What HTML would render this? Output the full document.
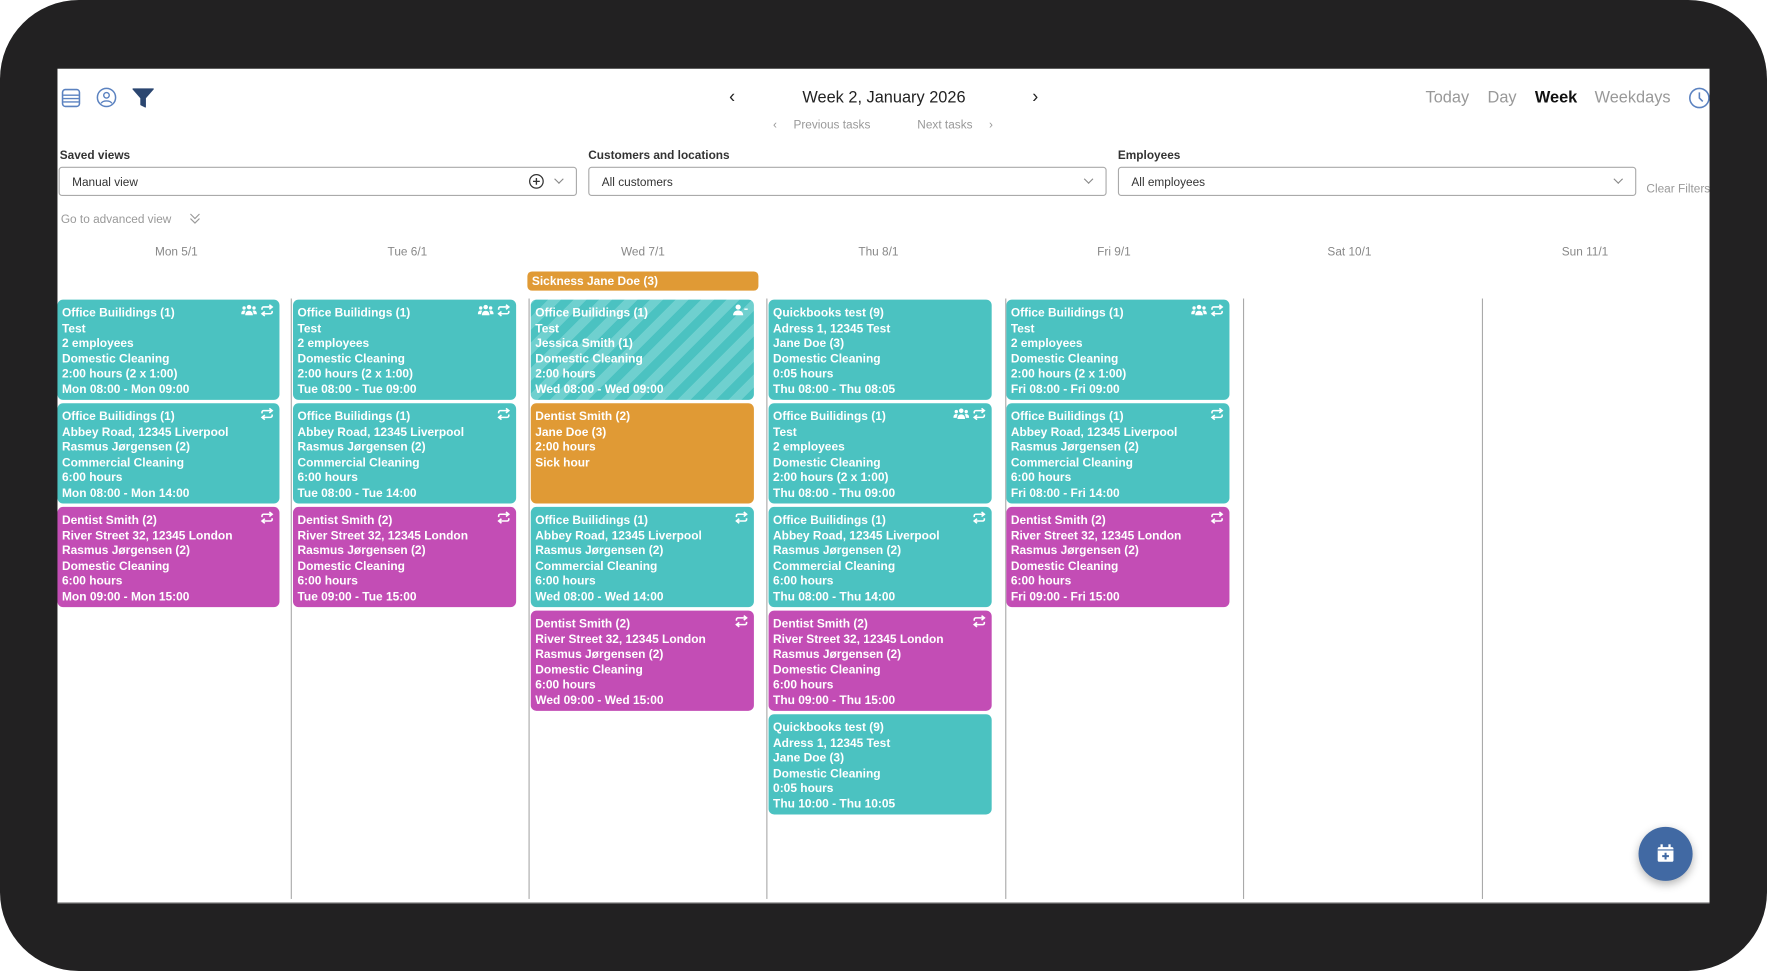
<!DOCTYPE html>
<html><head><meta charset="utf-8"><style>
html,body{margin:0;padding:0;background:#fff;width:1767px;height:971px;overflow:hidden}
#s{position:absolute;left:0;top:0;width:1568px;height:862px;transform:scale(1.12691,1.1265);transform-origin:0 0;font-family:"Liberation Sans",sans-serif}
.frame{position:absolute;left:0;top:0;width:1568px;height:862px;background:#222122;border-radius:70px}
.panel{position:absolute;left:51px;top:61px;width:1466px;height:740px;background:#fff;overflow:hidden;border-bottom:1px solid #888}
.a{position:absolute;white-space:nowrap}
.lbl{font-size:10.5px;font-weight:bold;color:#333}
.sel{position:absolute;height:25px;border:1px solid #aaa;border-radius:3px;box-sizing:border-box;font-size:10.5px;color:#333;padding:6px 11px}
.chev{position:absolute;right:12px;top:7px;width:5px;height:5px;border-right:1px solid #888;border-bottom:1px solid #888;transform:rotate(45deg)}
.dh{position:absolute;top:157px;font-size:10.5px;color:#888;width:211px;text-align:center}
.vl{position:absolute;top:204px;height:533px;width:1px;background:#aaa}
.c{position:absolute;width:197px;height:89px;border-radius:5px;color:#fff;font-size:10.6px;font-weight:bold;line-height:13.6px;padding:6px 4px 0;box-sizing:border-box;white-space:nowrap;overflow:hidden}
.t{background:#4bc2c1}.m{background:#c34db5}.o{background:#e09a35}
.str{background:repeating-linear-gradient(-45deg,#4bc2c1 0 8px,#6fd0cf 8px 16px)}
.ic{position:absolute;right:5px;top:4px;display:flex;gap:3px}
</style></head><body>
<svg width="0" height="0" style="position:absolute">
<defs>
<symbol id="pp" viewBox="0 0 14 10"><circle cx="7" cy="2.6" r="2" fill="#fff"/><circle cx="2.6" cy="3.4" r="1.5" fill="#fff"/><circle cx="11.4" cy="3.4" r="1.5" fill="#fff"/><path d="M3.6 10c0-3 1.5-4.2 3.4-4.2s3.4 1.2 3.4 4.2z" fill="#fff"/><path d="M0 9c0-2.4 1-3.4 2.6-3.4 .6 0 1 .1 1.3.4C3.3 6.8 3 7.8 3 9z" fill="#fff"/><path d="M14 9c0-2.4-1-3.4-2.6-3.4-.6 0-1 .1-1.3.4.6.8.9 1.8.9 3z" fill="#fff"/></symbol>
<symbol id="rp" viewBox="0 0 12 11"><path d="M1.5 5V4a1.5 1.5 0 0 1 1.5-1.5h7" fill="none" stroke="#fff" stroke-width="1.4"/><path d="M8 0.5l2.5 2-2.5 2" fill="none" stroke="#fff" stroke-width="1.4"/><path d="M10.5 6v1a1.5 1.5 0 0 1-1.5 1.5H2" fill="none" stroke="#fff" stroke-width="1.4"/><path d="M4 6.5l-2.5 2 2.5 2" fill="none" stroke="#fff" stroke-width="1.4"/></symbol>
<symbol id="pm" viewBox="0 0 14 10"><circle cx="5" cy="2.6" r="2.3" fill="#fff"/><path d="M0.5 10c0-3 2-4.5 4.5-4.5S9.5 7 9.5 10z" fill="#fff"/><path d="M10.5 4.5h3" stroke="#fff" stroke-width="1.2"/></symbol>
</defs></svg>
<div id="s">
<div class="frame"></div>
<div class="panel">
 <svg class="a" style="left:3px;top:17px" width="18" height="18" viewBox="0 0 18 18"><rect x="1.5" y="1.5" width="15" height="15" rx="2.5" fill="none" stroke="#5b82c0" stroke-width="1.4"/><path d="M2 6.5h14M2 9.5h14M2 12.5h14" stroke="#5b82c0" stroke-width="1.3"/></svg>
 <svg class="a" style="left:34px;top:16px" width="19" height="19" viewBox="0 0 20 20"><circle cx="10" cy="10" r="8.5" fill="none" stroke="#5b82c0" stroke-width="1.4"/><circle cx="10" cy="8" r="2.6" fill="none" stroke="#5b82c0" stroke-width="1.3"/><path d="M5 15.5c1.5-3 8.5-3 10 0" fill="none" stroke="#5b82c0" stroke-width="1.3"/></svg>
 <svg class="a" style="left:66px;top:17px" width="20" height="18" viewBox="0 0 20 18"><path d="M1 1h18l-7 8v8l-4-2V9z" fill="#2b4670" stroke="#2b4670" stroke-linejoin="round"/></svg>
 <div class="a" style="left:596px;top:17px;font-size:16px;color:#222">&#8249;</div>
 <div class="a" style="left:661px;top:18px;font-size:14.5px;color:#222">Week 2, January 2026</div>
 <div class="a" style="left:865px;top:17px;font-size:16px;color:#222">&#8250;</div>
 <div class="a" style="left:635px;top:44px;font-size:10.5px;color:#999">&#8249;&nbsp;&nbsp;&nbsp;&nbsp;&nbsp;Previous tasks</div>
 <div class="a" style="left:763px;top:44px;font-size:10.5px;color:#999">Next tasks&nbsp;&nbsp;&nbsp;&nbsp;&nbsp;&#8250;</div>
 <div class="a" style="left:1214px;top:18px;font-size:14.5px;color:#999">Today</div>
 <div class="a" style="left:1269px;top:18px;font-size:14.5px;color:#999">Day</div>
 <div class="a" style="left:1311px;top:18px;font-size:14.5px;color:#111;font-weight:bold">Week</div>
 <div class="a" style="left:1364px;top:18px;font-size:14.5px;color:#999">Weekdays</div>
 <svg class="a" style="left:1447px;top:16px" width="20" height="20" viewBox="0 0 20 20"><circle cx="10" cy="10" r="8.5" fill="none" stroke="#5b82c0" stroke-width="1.4"/><path d="M10 5v5l3 3" fill="none" stroke="#5b82c0" stroke-width="1.4"/></svg>
 <div class="a lbl" style="left:2px;top:71px">Saved views</div>
 <div class="a lbl" style="left:471px;top:71px">Customers and locations</div>
 <div class="a lbl" style="left:941px;top:71px">Employees</div>
 <div class="sel" style="left:1px;top:87px;width:460px;height:26px;padding-top:7px">Manual view<svg style="position:absolute;right:28px;top:5px" width="14" height="14" viewBox="0 0 14 14"><circle cx="7" cy="7" r="6" fill="none" stroke="#333" stroke-width="1.1"/><path d="M7 4v6M4 7h6" stroke="#333" stroke-width="1.2"/></svg><div class="chev"></div></div>
 <div class="sel" style="left:471px;top:87px;width:460px;height:26px;padding-top:7px">All customers<div class="chev"></div></div>
 <div class="sel" style="left:941px;top:87px;width:460px;height:26px;padding-top:7px">All employees<div class="chev"></div></div>
 <div class="a" style="left:1410px;top:101px;font-size:10.5px;color:#999">Clear Filters</div>
 <div class="a" style="left:3px;top:128px;font-size:10.5px;color:#999">Go to advanced view</div>
 <svg class="a" style="left:117px;top:128px" width="10" height="11" viewBox="0 0 10 11"><path d="M1 1l4 4 4-4M1 5l4 4 4-4" fill="none" stroke="#999" stroke-width="1"/></svg>
 <div class="dh" style="left:0">Mon 5/1</div>
 <div class="dh" style="left:205px">Tue 6/1</div>
 <div class="dh" style="left:414px">Wed 7/1</div>
 <div class="dh" style="left:623px">Thu 8/1</div>
 <div class="dh" style="left:832px">Fri 9/1</div>
 <div class="dh" style="left:1041px">Sat 10/1</div>
 <div class="dh" style="left:1250px">Sun 11/1</div>
 <div class="vl" style="left:207px"></div><div class="vl" style="left:418px"></div><div class="vl" style="left:629px"></div><div class="vl" style="left:841px"></div><div class="vl" style="left:1052px"></div><div class="vl" style="left:1264px"></div>
 <div class="a" style="left:417px;top:180px;width:205px;height:17px;background:#e09a35;border-radius:4px;color:#fff;font-size:10.6px;font-weight:bold;line-height:18px;padding-left:4px;box-sizing:border-box">Sickness Jane Doe (3)</div>
 <div class="c t" style="left:0;top:205px">Office Builidings (1)<br>Test<br>2 employees<br>Domestic Cleaning<br>2:00 hours (2 x 1:00)<br>Mon 08:00 - Mon 09:00<span class="ic"><svg width="14" height="10"><use href="#pp"/></svg><svg width="12" height="11"><use href="#rp"/></svg></span></div>
 <div class="c t" style="left:0;top:297px">Office Builidings (1)<br>Abbey Road, 12345 Liverpool<br>Rasmus Jørgensen (2)<br>Commercial Cleaning<br>6:00 hours<br>Mon 08:00 - Mon 14:00<span class="ic"><svg width="12" height="11"><use href="#rp"/></svg></span></div>
 <div class="c m" style="left:0;top:389px">Dentist Smith (2)<br>River Street 32, 12345 London<br>Rasmus Jørgensen (2)<br>Domestic Cleaning<br>6:00 hours<br>Mon 09:00 - Mon 15:00<span class="ic"><svg width="12" height="11"><use href="#rp"/></svg></span></div>
 <div class="c t" style="left:209px;top:205px;width:198px">Office Builidings (1)<br>Test<br>2 employees<br>Domestic Cleaning<br>2:00 hours (2 x 1:00)<br>Tue 08:00 - Tue 09:00<span class="ic"><svg width="14" height="10"><use href="#pp"/></svg><svg width="12" height="11"><use href="#rp"/></svg></span></div>
 <div class="c t" style="left:209px;top:297px;width:198px">Office Builidings (1)<br>Abbey Road, 12345 Liverpool<br>Rasmus Jørgensen (2)<br>Commercial Cleaning<br>6:00 hours<br>Tue 08:00 - Tue 14:00<span class="ic"><svg width="12" height="11"><use href="#rp"/></svg></span></div>
 <div class="c m" style="left:209px;top:389px;width:198px">Dentist Smith (2)<br>River Street 32, 12345 London<br>Rasmus Jørgensen (2)<br>Domestic Cleaning<br>6:00 hours<br>Tue 09:00 - Tue 15:00<span class="ic"><svg width="12" height="11"><use href="#rp"/></svg></span></div>
 <div class="c str" style="left:420px;top:205px;width:198px">Office Builidings (1)<br>Test<br>Jessica Smith (1)<br>Domestic Cleaning<br>2:00 hours<br>Wed 08:00 - Wed 09:00<span class="ic"><svg width="14" height="10"><use href="#pm"/></svg></span></div>
 <div class="c o" style="left:420px;top:297px;width:198px">Dentist Smith (2)<br>Jane Doe (3)<br>2:00 hours<br>Sick hour</div>
 <div class="c t" style="left:420px;top:389px;width:198px">Office Builidings (1)<br>Abbey Road, 12345 Liverpool<br>Rasmus Jørgensen (2)<br>Commercial Cleaning<br>6:00 hours<br>Wed 08:00 - Wed 14:00<span class="ic"><svg width="12" height="11"><use href="#rp"/></svg></span></div>
 <div class="c m" style="left:420px;top:481px;width:198px">Dentist Smith (2)<br>River Street 32, 12345 London<br>Rasmus Jørgensen (2)<br>Domestic Cleaning<br>6:00 hours<br>Wed 09:00 - Wed 15:00<span class="ic"><svg width="12" height="11"><use href="#rp"/></svg></span></div>
 <div class="c t" style="left:631px;top:205px;width:198px">Quickbooks test (9)<br>Adress 1, 12345 Test<br>Jane Doe (3)<br>Domestic Cleaning<br>0:05 hours<br>Thu 08:00 - Thu 08:05</div>
 <div class="c t" style="left:631px;top:297px;width:198px">Office Builidings (1)<br>Test<br>2 employees<br>Domestic Cleaning<br>2:00 hours (2 x 1:00)<br>Thu 08:00 - Thu 09:00<span class="ic"><svg width="14" height="10"><use href="#pp"/></svg><svg width="12" height="11"><use href="#rp"/></svg></span></div>
 <div class="c t" style="left:631px;top:389px;width:198px">Office Builidings (1)<br>Abbey Road, 12345 Liverpool<br>Rasmus Jørgensen (2)<br>Commercial Cleaning<br>6:00 hours<br>Thu 08:00 - Thu 14:00<span class="ic"><svg width="12" height="11"><use href="#rp"/></svg></span></div>
 <div class="c m" style="left:631px;top:481px;width:198px">Dentist Smith (2)<br>River Street 32, 12345 London<br>Rasmus Jørgensen (2)<br>Domestic Cleaning<br>6:00 hours<br>Thu 09:00 - Thu 15:00<span class="ic"><svg width="12" height="11"><use href="#rp"/></svg></span></div>
 <div class="c t" style="left:631px;top:573px;width:198px">Quickbooks test (9)<br>Adress 1, 12345 Test<br>Jane Doe (3)<br>Domestic Cleaning<br>0:05 hours<br>Thu 10:00 - Thu 10:05</div>
 <div class="c t" style="left:842px;top:205px;width:198px">Office Builidings (1)<br>Test<br>2 employees<br>Domestic Cleaning<br>2:00 hours (2 x 1:00)<br>Fri 08:00 - Fri 09:00<span class="ic"><svg width="14" height="10"><use href="#pp"/></svg><svg width="12" height="11"><use href="#rp"/></svg></span></div>
 <div class="c t" style="left:842px;top:297px;width:198px">Office Builidings (1)<br>Abbey Road, 12345 Liverpool<br>Rasmus Jørgensen (2)<br>Commercial Cleaning<br>6:00 hours<br>Fri 08:00 - Fri 14:00<span class="ic"><svg width="12" height="11"><use href="#rp"/></svg></span></div>
 <div class="c m" style="left:842px;top:389px;width:198px">Dentist Smith (2)<br>River Street 32, 12345 London<br>Rasmus Jørgensen (2)<br>Domestic Cleaning<br>6:00 hours<br>Fri 09:00 - Fri 15:00<span class="ic"><svg width="12" height="11"><use href="#rp"/></svg></span></div>
 <div class="a" style="left:1403px;top:673px;width:48px;height:48px;border-radius:50%;background:#4169a3;box-shadow:0 3px 8px rgba(0,0,0,.3)">
  <svg style="position:absolute;left:16px;top:15px" width="16" height="17" viewBox="0 0 16 17"><rect x="1" y="3" width="14" height="13" rx="1.5" fill="#fff"/><rect x="3.5" y="0.5" width="2" height="4" fill="#fff"/><rect x="10.5" y="0.5" width="2" height="4" fill="#fff"/><rect x="1" y="5" width="14" height="1" fill="#4169a3"/><path d="M8 8v6M5 11h6" stroke="#4169a3" stroke-width="1.8"/></svg>
 </div>
</div>
</div></body></html>
